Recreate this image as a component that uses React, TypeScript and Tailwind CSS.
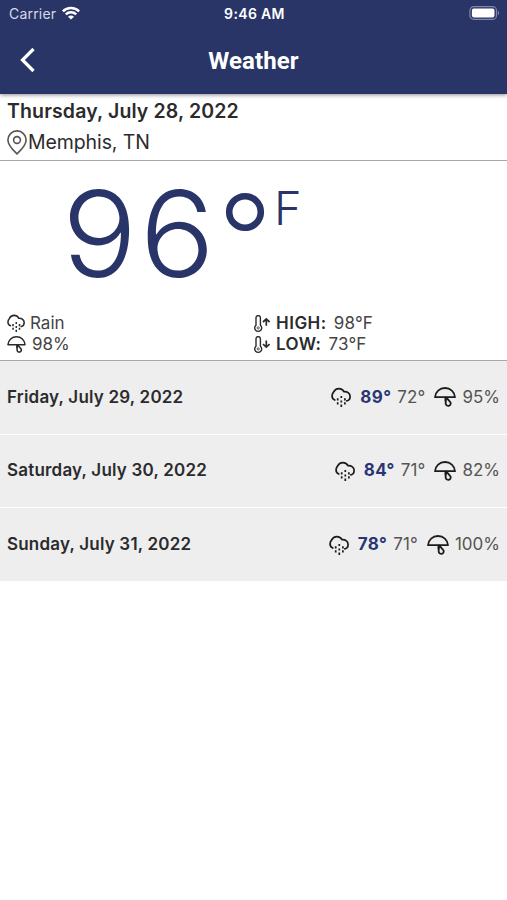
type IconProps = { className?: string };

const forecast = [
    { date: 'Friday, July 29, 2022', high: 89, low: 72, rain: 95 },
    { date: 'Saturday, July 30, 2022', high: 84, low: 71, rain: 82 },
    { date: 'Sunday, July 31, 2022', high: 78, low: 71, rain: 100 },
];

function RainIcon({ className }: IconProps) {
    return (
        <svg viewBox="0 0 20 20" fill="none" stroke="currentColor" strokeWidth="1.7" className={className}>
            <path
                d="M3.800 13C1.900 12.200.9 10.500 1.100 8.500 1.200 7 1.800 5.900 2.700 4.900A5.700 5.700 0 0 1 13 4.700c3.600-.2 6.100 1.900 6.100 4.800 0 2.300-1.200 4-3.300 4.400"
                strokeLinecap="round"
            />
            <path d="M6.700 11.200v2.400M6.700 15.200v2.400M10.300 9v2M10.300 13.400v2.200M10.300 17.600V20M13.900 11.200v2.400M13.900 15.200v2.400" />
        </svg>
    );
}

function UmbrellaIcon({ className }: IconProps) {
    return (
        <svg viewBox="0 0 22 20" fill="none" stroke="currentColor" strokeWidth="1.8" strokeLinejoin="round" className={className}>
            <path d="M1 10.200C1.400 4.800 5.600 1 11 1s9.600 3.800 10 9.200z" />
            <path d="M11.400 10.200v4.200M12.200 10.400l3.700 4.200a2.500 2.500 0 1 1-4.200 2c-.2-1.900.5-4.100.5-6.200z" />
        </svg>
    );
}

function ThermometerIcon({ className, down }: IconProps & { down?: boolean }) {
    return (
        <svg viewBox="0 0 18 18" fill="none" stroke="currentColor" strokeWidth="1.400" className={className}>
            <path d="M3 10.200V2.800a2.200 2.200 0 0 1 4.400 0v7.400a3.500 3.500 0 1 1-4.400 0z" />
            <circle cx="5.200" cy="12.900" r="1.100" strokeWidth=".8" />
            {down ? (
                <path d="M13.300 4.400v6.800M10 8.200l3.300 3 3.300-3" strokeWidth="1.700" />
            ) : (
                <path d="M13.300 10.800V4M10 7l3.300-3 3.300 3" strokeWidth="1.700" />
            )}
        </svg>
    );
}

function PinIcon({ className }: IconProps) {
    return (
        <svg viewBox="0 0 20 25" fill="none" stroke="currentColor" strokeWidth="1.600" className={className}>
            <path d="M10 23.900C6.500 20.500.9 15.500.9 10a9.100 9.100 0 0 1 18.200 0c0 5.500-5.600 10.500-9.100 13.900z" strokeLinejoin="round" />
            <circle cx="10" cy="10" r="3.400" />
        </svg>
    );
}

function StatusBar() {
    return (
        <div className="grid h-7 grid-cols-3 items-center pl-[9px] pr-[7px] text-[14px] leading-none">
            <div className="flex items-center gap-[6px] text-[#d5d9ea]">
                <span className="text-[14px] tracking-[0.200px]">Carrier</span>
                <svg viewBox="0 0 18 14" className="mb-[2px] h-[14px] w-[18px] text-white" fill="none" stroke="currentColor" strokeWidth="2.500">
                    <path d="M.9 5.300a11.500 11.500 0 0 1 16.200 0" />
                    <path d="M3.800 8.400a7.400 7.400 0 0 1 10.400 0" />
                    <path d="M9 13.600 6 10.700a4.200 4.200 0 0 1 6 0z" fill="currentColor" stroke="none" />
                </svg>
            </div>
            <span className="text-center font-semibold tracking-[0.350px]">9:46 AM</span>
            <svg viewBox="0 0 31 14" className="mb-[2px] h-[14px] w-[31px] justify-self-end">
                <rect x=".9" y=".7" width="26.600" height="12.600" rx="3.800" fill="none" stroke="#7f86a8" strokeWidth="1.200" />
                <rect x="2.900" y="2.600" width="22.600" height="8.800" rx="1.800" fill="white" />
                <path d="M28.800 4.800v4.400c1.800-.8 1.800-3.600 0-4.400z" fill="#7f86a8" />
            </svg>
        </div>
    );
}

export default function App() {
    return (
        <div className="min-h-[900px] w-full overflow-hidden bg-white font-['Inter',sans-serif] text-[#2b2b2d]">
            {/* Header */}
            <header className="relative h-[94px] bg-[#2a3567] text-white shadow-[0_1px_4px_rgba(0,0,0,0.450)]">
                <StatusBar />
                <div className="grid h-[66px] grid-cols-[60px_1fr_60px] items-center">
                    <svg viewBox="0 0 16 26" className="mb-[3px] ml-[19px] h-[26px] w-4" fill="none" stroke="currentColor" strokeWidth="3.200">
                        <path d="M14.500 2 3.500 13l11 11" />
                    </svg>
                    <h1 className="text-center font-['Roboto',sans-serif] text-[24px] font-bold leading-none tracking-[0.100px]">Weather</h1>
                </div>
            </header>

            {/* Date and place */}
            <section className="h-[67px] border-b border-[#a8a8a8] px-[7px] pt-[2px]">
                <h2 className="h-[31px] text-[19.500px] font-semibold leading-[31px] tracking-[0.130px]">Thursday, July 28, 2022</h2>
                <div className="flex h-[30px] items-center">
                    <PinIcon className="h-[25px] w-5 text-[#555]" />
                    <span className="ml-px text-[19.500px] leading-[30px] tracking-[-0.100px]">Memphis, TN</span>
                </div>
            </section>

            {/* Current conditions */}
            <section className="h-[200px] border-b border-[#a8a8a8]">
                <div className="flex h-[151px] items-start pl-[62px] text-[#293568]">
                    <span className="w-[155px] origin-left scale-x-[1.040] pt-[10px] text-[120px] font-light leading-[126px] tracking-[2.500px]">96</span>
                    <svg viewBox="0 0 40 40" className="ml-2 mt-[31px] size-10" fill="none" stroke="currentColor" strokeWidth="6.600">
                        <circle cx="20" cy="20" r="15.800" />
                    </svg>
                    <span className="ml-[9px] mt-[23px] text-[47px] font-light leading-[48px]">F</span>
                </div>
                <div className="grid grid-cols-[246px_1fr] pl-[7px] pt-px text-[17px] leading-[21px]">
                    <div className="flex items-center gap-[5px]">
                        <RainIcon className="mb-px size-[18px]" />
                        <span className="text-[#444]">Rain</span>
                    </div>
                    <div className="flex items-center">
                        <ThermometerIcon className="mr-[5px] size-[18px]" />
                        <span className="font-semibold tracking-[0.500px]">HIGH:</span>
                        <span className="ml-[7px] tracking-[0.200px] text-[#444]">98°F</span>
                    </div>
                    <div className="flex items-center gap-[6px]">
                        <UmbrellaIcon className="h-[17px] w-[19px]" />
                        <span className="text-[#444]">98%</span>
                    </div>
                    <div className="flex items-center">
                        <ThermometerIcon down className="mr-[5px] size-[18px]" />
                        <span className="font-semibold tracking-[0.400px]">LOW:</span>
                        <span className="ml-[7px] tracking-[0.200px] text-[#444]">73°F</span>
                    </div>
                </div>
            </section>

            {/* Next days */}
            <ul className="flex flex-col gap-px">
                {forecast.map((day) => (
                    <li
                        key={day.date}
                        className="flex h-[72.660px] items-center justify-between bg-[#eee] px-[7px] text-[17px]"
                    >
                        <span className="font-semibold tracking-[0.200px]">{day.date}</span>
                        <div className="flex items-center">
                            <RainIcon className="size-5 text-[#1c1c1c]" />
                            <span className="ml-[9px] font-bold tracking-[0.400px] text-[#2a3673]">{day.high}°</span>
                            <span className="ml-[6px] tracking-[0.100px] text-[#555]">{day.low}°</span>
                            <UmbrellaIcon className="ml-[9px] h-5 w-[22px] text-[#1c1c1c]" />
                            <span className="ml-[6px] text-[#555]">{day.rain}%</span>
                        </div>
                    </li>
                ))}
            </ul>
        </div>
    );
}
